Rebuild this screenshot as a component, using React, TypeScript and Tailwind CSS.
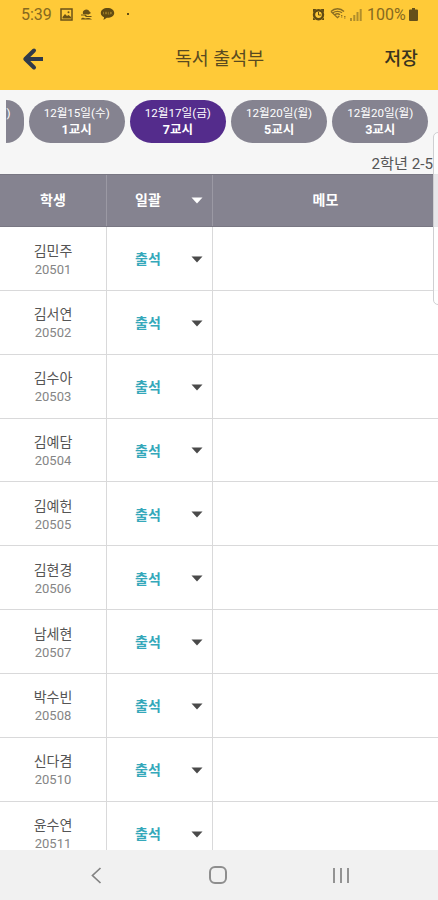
import React from "react";

interface Lesson {
  date: string;
  period: string;
  active?: boolean;
}

interface Student {
  name: string;
  id: string;
}

const LESSONS: Lesson[] = [
  { date: "12월15일(수)", period: "1교시" },
  { date: "12월17일(금)", period: "7교시", active: true },
  { date: "12월20일(월)", period: "5교시" },
  { date: "12월20일(월)", period: "3교시" },
];

const STUDENTS: Student[] = [
  { name: "김민주", id: "20501" },
  { name: "김서연", id: "20502" },
  { name: "김수아", id: "20503" },
  { name: "김예담", id: "20504" },
  { name: "김예헌", id: "20505" },
  { name: "김현경", id: "20506" },
  { name: "남세현", id: "20507" },
  { name: "박수빈", id: "20508" },
  { name: "신다겸", id: "20510" },
  { name: "윤수연", id: "20511" },
];

const StatusBar = () => (
  <div className="flex h-7 items-center justify-between pl-[21px] pr-[20px] text-[16px] leading-none text-[#86691f]">
    <div className="flex items-center">
      <span className="w-[31px] pt-px">5:39</span>
      <svg className="ml-2 h-[13px] w-[13px]" viewBox="0 0 13 13" fill="none">
        <rect x="1" y="1" width="11" height="11" stroke="#6b5217" strokeWidth="1.5" />
        <path d="M2.5 10.5V9L5 6l2 2 1.5-1L11 9v1.5z" fill="#6b5217" />
        <circle cx="8.5" cy="4.2" r="1" fill="#6b5217" />
      </svg>
      <svg className="ml-[7px] h-[13px] w-[13px]" viewBox="0 0 13 13" fill="#6b5217">
        <path d="M3 6a3.5 3.5 0 0 1 6.5-2.500L11 5 8.500 6.500z" />
        <path d="M1 6.500h4.500L7 8h4.500v1H6L4.500 7.500H1z" />
        <path d="M1 11.500c0-2 3-2.500 4-1 1.500-1 6-.8 7 1z" />
      </svg>
      <svg className="ml-[7px] h-[14px] w-[15px]" viewBox="0 0 15 14">
        <path
          d="M7.500 1C3.700 1 .8 3 .8 6c0 2 1.300 3.500 3.300 4.300L3.500 13l3.300-2.200C11 11 14.200 9 14.200 6S11.300 1 7.500 1z"
          fill="#5f4a12"
        />
        <path d="M3.500 4.800v2.500M5.200 7.300l.8-2.500.8 2.500M8.300 4.800v2.400h1M10.500 4.800v2.500M12 4.800l-1.200 1.200L12 7.300" stroke="#b08c2c" strokeWidth=".7" fill="none" />
      </svg>
      <span className="ml-3 h-[2px] w-[2px] rounded-full bg-[#2e2409]" />
    </div>
    <div className="flex items-center">
      <svg className="h-[13px] w-[13px]" viewBox="0 0 13 13">
        <path d="M1 1h3.500L1 4.500zM12 1H8.500L12 4.500zM1 12V9.500L3.500 12zM12 12V9.500L9.500 12z" fill="#5f4a12" />
        <circle cx="6.500" cy="6.700" r="4.500" fill="none" stroke="#5f4a12" strokeWidth="2.400" />
        <path d="M6.500 4v3H9" fill="none" stroke="#5f4a12" strokeWidth="1" />
      </svg>
      <svg className="ml-[5px] h-[14px] w-[17px]" viewBox="0 0 17 14" fill="none" stroke="#8a6d22" strokeWidth="1.300">
        <path d="M1 4.500C4.500.8 10.500.8 14 4.500M3 5.800c2.400-1.900 6.500-1.900 9 0M1 4.500l6.500 6.200L9.300 9M4.800 7.800c1.600-1.300 3.700-1.300 5.200 0" />
        <path d="M11.700 8v3M14.800 9v3" strokeDasharray="1.500 1" />
      </svg>
      <svg className="ml-[3px] h-[13px] w-[12px]" viewBox="0 0 12 13" fill="#b08d2c">
        <path d="M0 10h2v3H0zM3.300 7h2v6h-2zM6.500 4h2v9h-2zM9.700 1h2v12h-2z" />
      </svg>
      <span className="ml-[5px] w-[39px] pt-px">100%</span>
      <svg className="ml-[3px] h-[13px] w-[9px]" viewBox="0 0 9 13" fill="#65501a">
        <path d="M3 0h3v1.500h2a1 1 0 0 1 1 1V12a1 1 0 0 1-1 1H1a1 1 0 0 1-1-1V2.500a1 1 0 0 1 1-1h2z" />
      </svg>
    </div>
  </div>
);

const Caret: React.FC<{ className: string }> = ({ className }) => (
  <svg className={`h-[7px] w-[12px] ${className}`} viewBox="0 0 12 7" fill="currentColor">
    <path d="M.5.500h11L6 6.500z" />
  </svg>
);

const LessonPill: React.FC<{ lesson: Lesson }> = ({ lesson }) => (
  <button
    className={`flex h-[43px] w-[96px] shrink-0 flex-col items-center justify-center rounded-full text-white ${
      lesson.active ? "bg-[#542c8c]" : "bg-[#858390]"
    }`}
  >
    <span className="text-[11.600px] leading-[16px]">{lesson.date}</span>
    <span className="text-[12.500px] font-bold leading-[17px]">{lesson.period}</span>
  </button>
);

const StudentRow: React.FC<{ student: Student }> = ({ student }) => (
  <div className="flex h-[63.850px] shrink-0 border-b border-[#d9d9da]">
    <div className="flex w-[107px] flex-col items-center border-r border-[#d9d9da] pt-[13.500px]">
      <span className="text-[14px] leading-[20px] text-[#555555]">{student.name}</span>
      <span className="text-[13px] leading-[18px] text-[#858585]">{student.id}</span>
    </div>
    <div className="flex w-[106px] items-center border-r border-[#d9d9da] pl-[28px] pt-[2px]">
      <span className="w-[27px] text-[14px] font-bold leading-[20px] text-[#35a8ba]">출석</span>
      <Caret className="ml-[29px] text-[#4a4a4a]" />
    </div>
  </div>
);

const App = () => {
  return (
    <div className="relative flex h-[900px] w-[438px] flex-col overflow-hidden bg-white font-[Roboto,'Noto_Sans_CJK_KR',sans-serif]">
      <header className="h-[90px] shrink-0 bg-[#ffca38]">
        <StatusBar />
        <div className="grid h-[62px] grid-cols-[1fr_auto_1fr] items-center pl-[21px] pr-[20px]">
          <svg className="h-[24px] w-[23px]" viewBox="0 0 23 24" fill="none" stroke="#303a49" strokeWidth="4">
            <path d="M13 3.500L4.300 12l8.700 8.500" strokeLinecap="round" strokeLinejoin="round" />
            <path d="M4 12h18" />
          </svg>
          <h1 className="text-[18.400px] text-[#594a20]">독서 출석부</h1>
          <button className="justify-self-end text-[18.400px] font-medium text-[#3a3320]">저장</button>
        </div>
      </header>

      <section className="h-[84px] shrink-0 bg-[#f6f6f6] pt-[10px]">
        <div className="ml-[6px] flex gap-[5.200px] overflow-hidden">
          <div className="flex h-[43px] w-[17.500px] shrink-0 justify-end overflow-hidden rounded-r-full bg-[#858390]">
            <span className="w-[17px] pt-[5px] text-[11.700px] leading-[16px] text-white">)</span>
          </div>
          {LESSONS.map((lesson, index) => (
            <LessonPill key={index} lesson={lesson} />
          ))}
        </div>
        <p className="mt-[10px] pr-[5px] text-right text-[15.200px] leading-[23px] text-[#555555]">2학년 2-5</p>
      </section>

      <div className="flex h-[53px] shrink-0 border-y border-[#797783] bg-[#858390] text-[14px] font-bold text-white">
        <div className="flex w-[107px] items-center justify-center border-r border-[#9b99a4]">학생</div>
        <div className="flex w-[106px] items-center border-r border-[#9b99a4] pl-[28px]">
          <span className="w-[27px]">일괄</span>
          <Caret className="ml-[29px] text-white" />
        </div>
        <div className="flex flex-1 items-center justify-center">메모</div>
      </div>

      <main className="flex min-h-0 flex-1 flex-col overflow-hidden">
        {STUDENTS.map((student) => (
          <StudentRow key={student.id} student={student} />
        ))}
      </main>

      <nav className="flex h-[50px] shrink-0 items-center justify-between bg-[#f1f1f1] pl-[91px] pr-[89px]">
        <svg className="h-[17px] w-[11px]" viewBox="0 0 11 17" fill="none" stroke="#828282" strokeWidth="1.700">
          <path d="M9.500 1L1.500 8.500l8 7.500" />
        </svg>
        <span className="h-[18px] w-[18px] rounded-[6px] border-2 border-[#8e8e8e]" />
        <span className="flex h-[15px] w-[16px] justify-between">
          <i className="w-[2px] bg-[#939393]" />
          <i className="w-[2px] bg-[#939393]" />
          <i className="w-[2px] bg-[#939393]" />
        </span>
      </nav>

      {/* edge panel handle */}
      <div className="absolute -right-[6px] top-[132px] h-[173px] w-[11px] rounded-[5px] border border-[#cfcfd2] bg-white/80" />
    </div>
  );
};

export default App;
